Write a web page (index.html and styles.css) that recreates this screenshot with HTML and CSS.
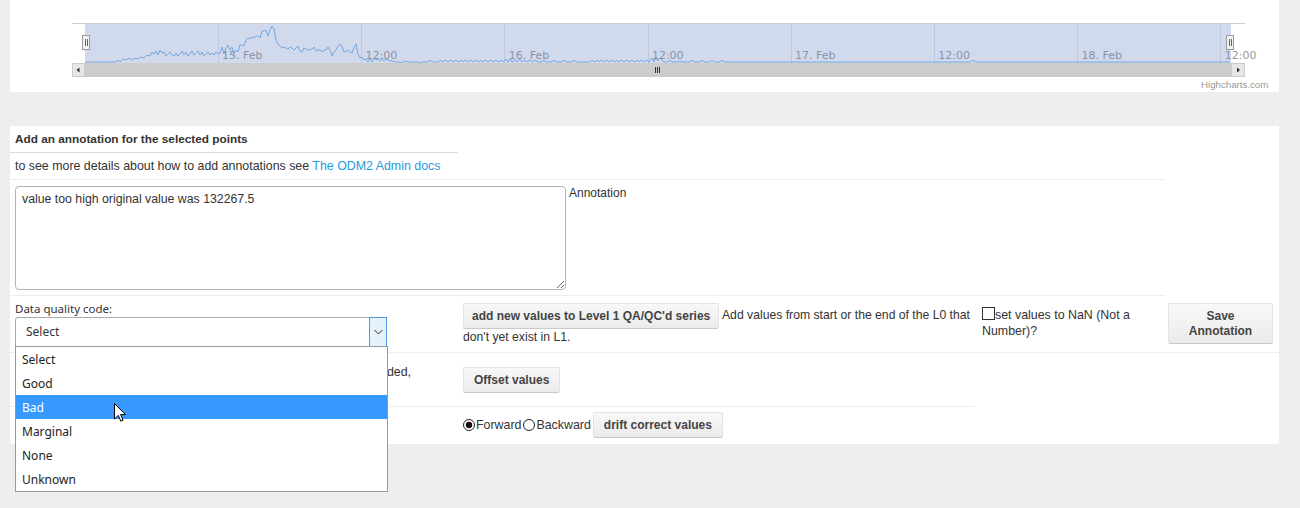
FILE: index.html
```html
<!DOCTYPE html>
<html>
<head>
<meta charset="utf-8">
<title>Annotate</title>
<link rel="stylesheet" href="styles.css">
</head>
<body>
<div class="page">
  <section class="chart-panel">
    <svg class="navigator" width="1269" height="92" viewBox="10 0 1269 92" xmlns="http://www.w3.org/2000/svg">
      <rect x="72" y="23" width="1173" height="40" fill="#ffffff"/>
      <g stroke="#e6e6e6" stroke-width="1">
        <line x1="218.5" y1="23" x2="218.5" y2="63"/>
        <line x1="361.5" y1="23" x2="361.5" y2="63"/>
        <line x1="504.5" y1="23" x2="504.5" y2="63"/>
        <line x1="648.5" y1="23" x2="648.5" y2="63"/>
        <line x1="791.5" y1="23" x2="791.5" y2="63"/>
        <line x1="934.5" y1="23" x2="934.5" y2="63"/>
        <line x1="1077.5" y1="23" x2="1077.5" y2="63"/>
        <line x1="1220.5" y1="23" x2="1220.5" y2="63"/>
      </g>
      <polyline fill="none" stroke="#7cb5ec" stroke-width="1" stroke-linejoin="round" points="85,62 116,62 118,60 120,62 123,59 126,60 129,58 132,60 135,58 138,59 141,57 144,58 147,55 150,56 152,52 154,54 156,51 158,55 160,50 162,53 164,52 166,56 168,54 170,52 172,55 174,56 176,53 178,56 180,54 182,51 184,55 186,52 188,56 190,54 192,51 194,55 196,53 198,51 200,55 202,52 204,56 206,54 208,52 210,55 212,53 214,55 216,52 218,54 220,53 222,47 224,54 226,48 228,45 230,50 232,47 234,54 236,50 238,52 240,45 242,45 244,46 246,40 248,38 250,39 252,37 254,38 256,36 258,36 260,38 262,31 264,31 266,30 268,36 270,30 272,26 274,29 276,40 278,44 280,46 282,48 284,47 286,48 288,49 290,47 292,48 294,50 296,48 298,46 300,51 302,52 304,48 306,49 308,50 310,50 312,49 314,47 316,51 318,50 320,50 322,52 324,50 326,50 328,47 330,50 332,56 334,52 336,50 338,46 340,44 342,47 344,52 346,51 348,50 350,52 352,53 354,47 356,44 358,54 360,58 362,57 364,60 366,59 368,62 370,58 372,62 374,58 376,60 378,59 380,61 382,58 384,61 386,59 388,60 392,61 396,62 400,62 402,63 404,61 408,62 418,62 420,63 423,62 428,62 430,60 432,62 438,62 441,60 443,62 446,60 448,62 451,60 453,62 456,60 458,62 461,60 463,62 466,60 468,62 471,60 473,62 476,60 478,62 481,60 483,62 486,60 488,62 491,60 493,62 496,60 498,62 501,60 503,62 506,59 508,62 510,59 512,62 515,60 517,62 520,59 522,62 525,60 527,62 530,60 532,62 535,60 538,62 542,62 544,60 546,62 552,62 554,60 556,62 562,62 564,60 566,62 572,62 574,60 576,62 590,62 592,60 594,62 597,60 599,62 602,60 604,62 607,60 609,62 612,60 614,62 617,60 619,62 622,60 624,62 627,60 629,62 632,60 634,62 637,60 639,62 642,60 644,62 647,60 649,62 652,58 654,62 656,57 658,61 660,58 662,60 664,62 668,62 670,60 672,62 678,62 680,61 682,62 690,62 692,60 694,62 700,62 702,60 704,62 710,62 712,60 714,62 720,62 722,60 724,62 970,62 973,60 976,62 1230,62"/>
      <g class="axis-labels" fill="#999999">
        <text x="222" y="59">15. Feb</text>
        <text x="365.5" y="59">12:00</text>
        <text x="508.7" y="59">16. Feb</text>
        <text x="651.9" y="59">12:00</text>
        <text x="795.1" y="59">17. Feb</text>
        <text x="938.3" y="59">12:00</text>
        <text x="1081.5" y="59">18. Feb</text>
        <text x="1224.7" y="59">12:00</text>
      </g>
      <rect x="85" y="23" width="1146" height="40" fill="rgba(102,133,194,0.3)"/>
      <line x1="72" y1="23.5" x2="1245" y2="23.5" stroke="#cccccc"/>
      <rect x="72" y="63" width="1173" height="14" fill="#f2f2f2"/>
      <rect x="85" y="63" width="1146" height="14" fill="#cccccc"/>
      <rect x="72.5" y="63.5" width="12" height="13" fill="#e6e6e6" stroke="#cccccc"/>
      <rect x="1231.5" y="63.5" width="13" height="13" fill="#e6e6e6" stroke="#cccccc"/>
      <path d="M79.5 67.5 L76.5 70 L79.5 72.5 Z" fill="#333333"/>
      <path d="M1237 67.5 L1240 70 L1237 72.5 Z" fill="#333333"/>
      <g stroke="#333333" stroke-width="1">
        <line x1="655.5" y1="67" x2="655.5" y2="73"/>
        <line x1="657.5" y1="67" x2="657.5" y2="73"/>
        <line x1="659.5" y1="67" x2="659.5" y2="73"/>
      </g>
      <g fill="#f2f2f2" stroke="#999999" stroke-width="1">
        <rect x="82.5" y="35.5" width="7" height="14"/>
        <rect x="1226.5" y="35.5" width="7" height="14"/>
      </g>
      <g stroke="#666666" stroke-width="1">
        <line x1="85.5" y1="39" x2="85.5" y2="46"/>
        <line x1="87.5" y1="39" x2="87.5" y2="46"/>
        <line x1="1229.5" y1="39" x2="1229.5" y2="46"/>
        <line x1="1231.5" y1="39" x2="1231.5" y2="46"/>
      </g>
      <text class="credits" x="1201" y="88" fill="#999999">Highcharts.com</text>
    </svg>
  </section>

  <section class="form-panel">
    <div class="row row-title">Add an annotation for the selected points</div>
    <div class="row row-docs">to see more details about how to add annotations see <a href="#">The ODM2 Admin docs</a></div>
    <div class="row row-text">
      <textarea class="annotation-input">value too high original value was 132267.5</textarea>
      <label class="annotation-label">Annotation</label>
    </div>
    <div class="row row-main">
      <div class="cell c1">
        <div class="dq-label">Data quality code:</div>
        <div class="select-wrap">
          <div class="select-box">
            <span>Select</span>
            <span class="select-arrow">
              <svg width="9" height="6" viewBox="0 0 9 6"><path d="M0.5 1 L4.5 5 L8.5 1" fill="none" stroke="#333" stroke-width="1"/></svg>
            </span>
          </div>
          <ul class="select-list">
            <li>Select</li>
            <li>Good</li>
            <li class="active">Bad</li>
            <li>Marginal</li>
            <li>None</li>
            <li>Unknown</li>
            <svg class="cursor" width="13" height="20" viewBox="0 0 13 20"><path d="M0.5 0.5 L0.5 16 L4.3 12.4 L6.8 18.2 L9 17.2 L6.6 11.6 L11.5 11.6 Z" fill="#ffffff" stroke="#000000" stroke-width="1" stroke-linejoin="miter"/></svg>
          </ul>
        </div>
      </div>
      <div class="cell c2">
        <button class="btn">add new values to Level 1 QA/QC'd series</button> Add values from start or the end of the L0 that don't yet exist in L1.
      </div>
      <div class="cell c3">
        <input type="checkbox" class="check">set values to NaN (Not a Number)?
      </div>
      <div class="cell c4">
        <button class="btn save">Save Annotation</button>
      </div>
    </div>
    <div class="row row-offset">
      <div class="cell c1 offset-note">If the values are recorded,</div>
      <div class="cell c2"><button class="btn btn-wide">Offset values</button></div>
    </div>
    <div class="row row-drift">
      <div class="cell c1"></div>
      <div class="cell c2">
        <label class="radio-label"><input type="radio" name="dir" class="radio" checked>Forward</label>
        <label class="radio-label"><input type="radio" name="dir" class="radio">Backward</label>
        <button class="btn btn-wide">drift correct values</button>
      </div>
    </div>
  </section>
</div>
</body>
</html>
```

FILE: styles.css
```css
* { box-sizing: border-box; }
html, body { margin: 0; padding: 0; }
body {
  background: #eeeeee;
  font-family: "Liberation Sans", Arial, sans-serif;
  font-size: 12.4px;
  color: #333333;
  width: 1300px;
  height: 508px;
  overflow: hidden;
}
.page { padding: 0 21px 0 10px; }

.chart-panel { background: #ffffff; height: 92px; }
.navigator { display: block; }
.axis-labels text { font-family: "DejaVu Sans", sans-serif; font-size: 11px; }
.credits { font-family: "Liberation Sans", Arial, sans-serif; font-size: 9.7px; }

.form-panel {
  background: #ffffff;
  margin-top: 34px;
  height: 318px;
  border-radius: 0 0 3px 3px;
}
.row { border-bottom: 1px solid #eeeeee; }
.row-title {
  width: 448px; height: 27px; line-height: 26px; padding-left: 5px;
  font-weight: bold; font-size: 11.8px; border-bottom-color: #dcdcdc;
}
.row-docs { width: 1155px; height: 27px; line-height: 26px; padding-left: 5px; }
.row-docs a { color: #1e9be0; text-decoration: none; }
.row-text {
  width: 1155px; height: 116px; padding: 6px 0 0 5px;
  display: flex; align-items: flex-start;
}
.annotation-input {
  width: 551px; height: 104px; margin: 0;
  border: 1px solid #b4b4b4; border-radius: 4px;
  padding: 5px 6px;
  font: 12.3px "Liberation Sans", Arial, sans-serif; color: #333333;
  resize: both; outline: none;
}
.annotation-label { margin-left: 3px; line-height: 14px; font-size: 12px; }

.row-main { display: flex; height: 57px; }
.row-offset { display: flex; width: 965px; height: 54px; }
.row-drift { display: flex; height: 37px; border-bottom: none; }
.cell { flex: none; }
.c1 { width: 448px; padding-left: 5px; }
.c2 { width: 517px; padding: 0 0 0 5px; }
.c3 { width: 190px; padding: 11px 0 0 7px; line-height: 16px; }
.c4 { width: 114px; padding: 7px 0 0 3px; }
.row-main .c1 { padding-top: 5px; }
.row-main .c2 { padding-top: 7px; line-height: 16px; font-size: 12.2px; }
.row-offset .c2 { padding-top: 14px; }
.row-drift .c2 { padding-top: 5px; display: flex; align-items: center; height: 31px; }

.offset-note { padding: 12px 47px 0 0; text-align: right; white-space: nowrap; line-height: 14px; }

.dq-label { font-family: "Noto Sans", sans-serif; font-size: 11.5px; line-height: 15px; }
.select-wrap {
  position: relative; width: 372px; margin-top: 1px;
  font-family: "Noto Sans", sans-serif; font-size: 12px;
}
.select-box {
  position: relative; height: 30px;
  border: 1px solid #a9a9a9; border-radius: 3px 3px 0 0;
  line-height: 28px; padding-left: 10px;
}
.select-arrow {
  position: absolute; top: -1px; right: -1px;
  width: 18px; height: 30px;
  background: #e5f1fb; border: 1px solid #4d96e0;
  display: flex; align-items: center; justify-content: center;
}
.select-list {
  position: absolute; top: 29px; left: 0; z-index: 10;
  width: 373px; margin: 0; padding: 0; list-style: none;
  background: #ffffff; border: 1px solid #9a9a9a;
}
.select-list li { height: 24px; line-height: 25px; padding-left: 6px; color: #222; }
.select-list li.active { background: #3699ff; color: #ffffff; }
.cursor { position: absolute; left: 98px; top: 56px; display: block; }

.btn {
  display: inline-block; vertical-align: middle;
  height: 26px; padding: 0 8px; margin: 0;
  font: bold 12px "Liberation Sans", Arial, sans-serif; color: #444444;
  background: linear-gradient(#f8f8f8, #ebebeb);
  border: 1px solid #e3e3e3; border-bottom-color: #c9c9c9;
  border-radius: 2px;
}
.btn-wide { padding: 0 10px; }
.save { width: 105px; height: 41px; line-height: 15px; padding: 0 8px; white-space: normal; }

.check {
  appearance: none; -webkit-appearance: none;
  width: 13px; height: 13px; margin: 0; vertical-align: -1px;
  border: 1px solid #333333; background: #ffffff;
}
.radio-label { display: inline-flex; align-items: center; margin-right: 2px; }
.radio {
  appearance: none; -webkit-appearance: none;
  width: 12px; height: 12px; margin: 0 1px 0 0;
  border: 1px solid #222222; border-radius: 50%; background: #ffffff;
}
.radio:checked { background: radial-gradient(circle, #111111 0 3px, #ffffff 3.6px); }
```
